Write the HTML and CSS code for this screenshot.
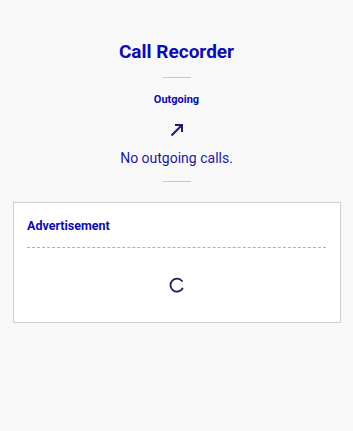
FILE: index.html
```html
<!DOCTYPE html>
<html lang="en">
<head>
    <meta charset="UTF-8">
    <meta name="viewport" content="width=device-width, initial-scale=1.0">
    <title>Call Recorder</title>
    <link rel="stylesheet" href="styles.css">
</head>
<body>
    <div class="app">
        <h1 class="title">Call Recorder</h1>
        <div class="rule"></div>
        <div class="section-label">Outgoing</div>
        <div class="arrow">
            <svg width="16" height="16" viewBox="0 0 16 16">
                <path d="M2.5 13.5 L13 3 M6 3 H13 V10" fill="none" stroke="#1a1a78" stroke-width="2"/>
            </svg>
        </div>
        <div class="empty">No outgoing calls.</div>
        <div class="rule"></div>
    </div>
    <div class="ad-card">
        <div class="ad-title">Advertisement</div>
        <div class="ad-divider"></div>
        <div class="ad-body">
            <svg class="spinner" width="18" height="18" viewBox="0 0 18 18">
                <path d="M14 5 A6.5 6.5 0 1 0 14.5 12.5" fill="none" stroke="#1a1a5e" stroke-width="1.8" stroke-linecap="round"/>
            </svg>
        </div>
    </div>
</body>
</html>
```

FILE: styles.css
```css
body {
    margin: 0;
    background-color: #f8f8f8;
    font-family: Roboto, "Liberation Sans", sans-serif;
}
.app {
    display: flex;
    flex-direction: column;
    align-items: center;
    padding-top: 39px;
}
.title {
    margin: 0;
    font-size: 19px;
    font-weight: bold;
    color: #0c0cb0;
    line-height: 26px;
}
.rule {
    width: 28px;
    height: 1px;
    background-color: #c8c8c8;
}
.title + .rule {
    margin-top: 12px;
}
.section-label {
    margin-top: 15px;
    font-size: 11px;
    font-weight: bold;
    color: #0c0cb0;
    line-height: 14px;
}
.arrow {
    margin-top: 15px;
    height: 16px;
}
.empty {
    margin-top: 10px;
    font-size: 14px;
    color: #1a1aa0;
    line-height: 20px;
}
.empty + .rule {
    margin-top: 13px;
}
.ad-card {
    margin: 20px 12px 0 13px;
    height: 119px;
    background-color: #fff;
    border: 1px solid #cfcfcf;
    padding: 0 14px 0 13px;
}
.ad-title {
    margin-top: 14px;
    font-size: 12.5px;
    font-weight: bold;
    color: #0c0cb0;
    line-height: 17px;
}
.ad-divider {
    margin-top: 13px;
    border-top: 1px dashed #b0b0b0;
}
.ad-body {
    display: flex;
    justify-content: center;
    padding-top: 28px;
}
```
